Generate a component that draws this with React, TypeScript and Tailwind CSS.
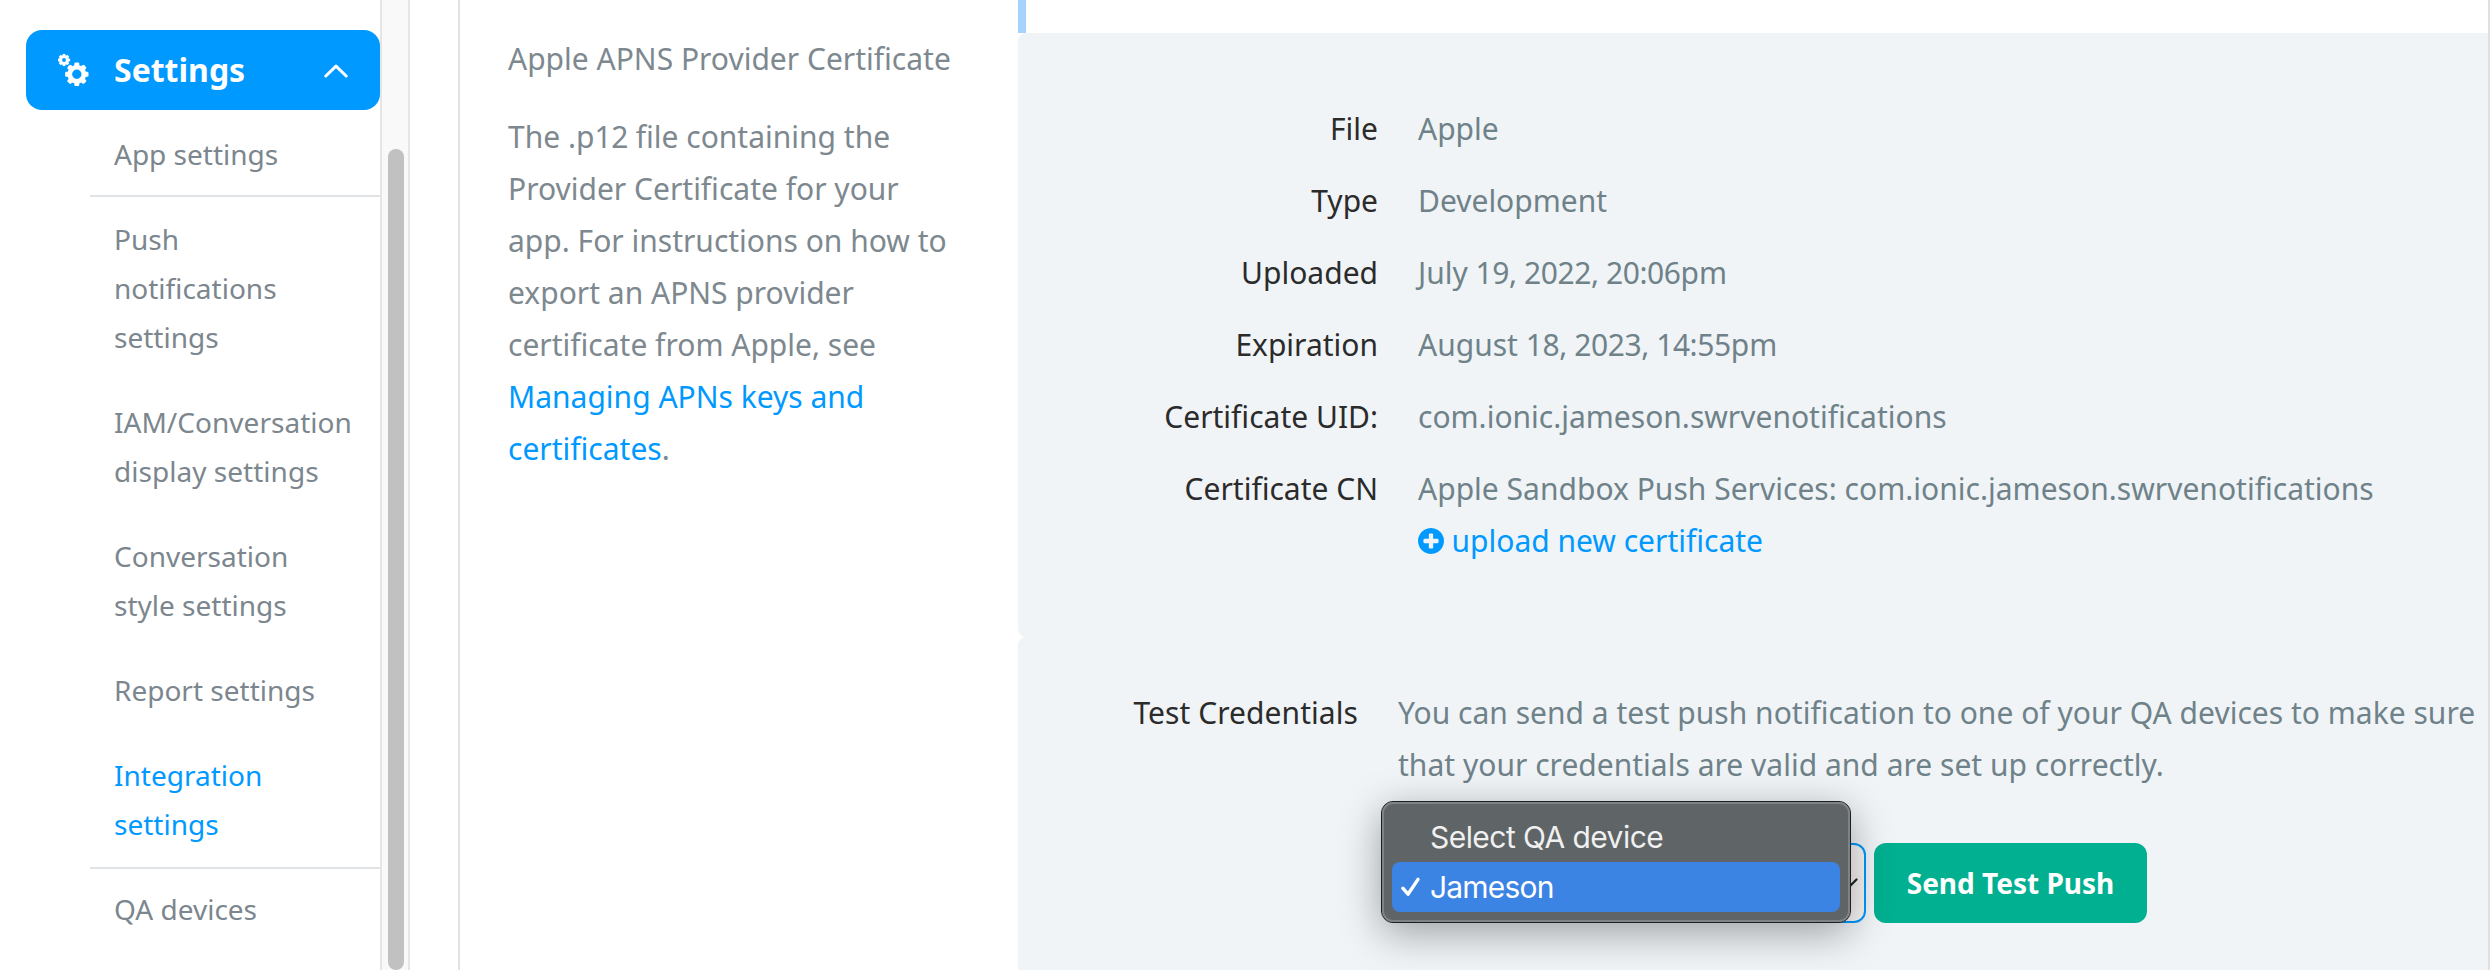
import type { ReactNode } from "react";

const TEETH = [0, 45, 90, 135, 180, 225, 270, 315];

function Gear({ cx, cy, outer, body, hole, tooth }: { cx: number; cy: number; outer: number; body: number; hole: number; tooth: number }) {
  const mid = (body + hole) / 2;
  return (
    <g transform={`translate(${cx} ${cy})`} stroke="currentColor" fill="none">
      <circle r={mid} strokeWidth={body - hole} />
      {TEETH.map((a) => (
        <rect
          key={a}
          x={-tooth / 2}
          y={-outer}
          width={tooth}
          height={outer - mid}
          rx={tooth / 4}
          fill="currentColor"
          stroke="none"
          transform={`rotate(${a})`}
        />
      ))}
    </g>
  );
}

function GearsIcon() {
  return (
    <svg viewBox="0 0 32 34" className="h-[34px] w-8 shrink-0">
      <Gear cx={6} cy={7} outer={6.1} body={4.8} hole={1.9} tooth={3} />
      <Gear cx={18.8} cy={21.3} outer={11.7} body={9.4} hole={4.7} tooth={5} />
    </svg>
  );
}

function PlusCircle() {
  return (
    <svg viewBox="128 128 1536 1536" className="h-[26px] w-[26px] shrink-0 fill-current">
      <path d="M1344 960v-128q0-26-19-45t-45-19h-256v-256q0-26-19-45t-45-19h-128q-26 0-45 19t-19 45v256h-256q-26 0-45 19t-19 45v128q0 26 19 45t45 19h256v256q0 26 19 45t45 19h128q26 0 45-19t19-45v-256h256q26 0 45-19t19-45zm320-64q0 209-103 385.5t-279.5 279.5-385.5 103-385.5-103-279.5-279.5-103-385.5 103-385.5 279.5-279.5 385.5-103 385.5 103 279.5 279.5 103 385.5z" />
    </svg>
  );
}

const navItems: { label: ReactNode; className: string }[] = [
  { label: "App settings", className: "border-b-2 pt-[18px] pb-4 text-[#7c868e]" },
  { label: <>Push<br />notifications<br />settings</>, className: "py-[18px] text-[#7c868e]" },
  { label: <>IAM/Conversation<br />display settings</>, className: "py-[18px] tracking-[0.03px] text-[#7c868e]" },
  { label: <>Conversation<br />style settings</>, className: "py-[18px] text-[#7c868e]" },
  { label: "Report settings", className: "py-[18px] text-[#7c868e]" },
  { label: <>Integration<br />settings</>, className: "border-b-2 py-[18px] text-[#0099ff]" },
  { label: "QA devices", className: "pt-4 text-[#7c868e]" },
];

function Sidebar() {
  return (
    <nav className="w-[380px] shrink-0 pt-[30px] pl-[26px]">
      <button className="flex h-20 w-[354px] items-center rounded-2xl bg-[#0099ff] pr-8 pl-8 text-white">
        <GearsIcon />
        <span className="ml-6 text-[32px] leading-[44px] font-bold">Settings</span>
        <svg viewBox="0 0 24 14" className="mt-[1px] ml-auto h-[14px] w-6" fill="none" stroke="currentColor" strokeWidth="3" strokeLinecap="round" strokeLinejoin="round">
          <path d="M1.8 12L12 2.2L22.2 12" />
        </svg>
      </button>
      <ul className="mt-0.5 ml-16 text-[28px] leading-[49px]">
        {navItems.map((item, i) => (
          <li key={i} className={`border-[#dfe3e6] pl-6 whitespace-nowrap ${item.className}`}>
            {item.label}
          </li>
        ))}
      </ul>
    </nav>
  );
}

function Row({ label, children }: { label: string; children: ReactNode }) {
  return (
    <div className="mb-5 flex gap-10 last:mb-0">
      <dt className="w-[360px] text-right text-[#2b2b2b]">{label}</dt>
      <dd>{children}</dd>
    </div>
  );
}

/* Numerals are set slightly tighter than the surrounding words. */
function Num({ children }: { children: string }) {
  return <span className="tracking-[-0.42px]">{children}</span>;
}

function DeviceMenu() {
  return (
    <div className="absolute -top-[42px] -left-[17px] h-[122px] w-[470px] rounded-xl border border-[#1d2023] bg-[#5f6467] shadow-[0_10px_40px_rgba(0,0,0,0.35)]">
      <div className="h-full rounded-[11px] border-2 border-[#7f8385] px-2 py-2 font-['Inter',sans-serif] text-[30px] leading-[50px] tracking-[-0.55px] text-[#f0f0f0]">
        <div className="pl-[38px]">Select QA device</div>
        <div className="flex rounded-lg bg-[#3b84e4] tracking-[-0.8px] text-white">
          <span className="flex w-[38px] items-center pl-2">
            <svg viewBox="0 0 22 22" className="h-[22px] w-[22px]" fill="none" stroke="currentColor" strokeWidth="3.4" strokeLinecap="round" strokeLinejoin="round">
              <path d="M2.8 12.2L8 18.2L18 3.4" />
            </svg>
          </span>
          Jameson
        </div>
      </div>
    </div>
  );
}

export default function App() {
  return (
    <div className="flex h-[970px] w-[2490px] overflow-hidden bg-white font-['Noto_Sans',sans-serif] text-[30px] leading-[52px] text-[#7d888f]">
      <Sidebar />
      <div className="w-[30px] shrink-0 border-x-2 border-[#e5e5e5] bg-[#f9f9f9] pt-[149px] pl-1.5">
        <div className="h-[821px] w-4 rounded-full bg-[#c1c1c1]" />
      </div>
      <main className="ml-12 flex grow border-x-2 border-l-[#dfe3e6] border-r-[#e0e0e0]">
        <section className="w-[558px] shrink-0 pt-[33px] pl-12">
          <h2>Apple APNS Provider Certificate</h2>
          <p className="mt-[26px] whitespace-nowrap">
            The .p<Num>12</Num> file containing the
            <br />
            Provider Certificate for your
            <br />
            app. For instructions on how to
            <br />
            export an APNS provider
            <br />
            certificate from Apple, see
            <br />
            <a className="text-[#0099ff]">
              Managing APNs keys and
              <br />
              certificates
            </a>
            .
          </p>
        </section>
        <section className="grow text-[#6f8289]">
          <div className="h-[33px] w-2 bg-[#a6d3fd]" />
          <dl className="h-[604px] rounded-l-lg bg-[#f0f4f7] pt-[70px]">
            <Row label="File">Apple</Row>
            <Row label="Type">Development</Row>
            <Row label="Uploaded">
              July <Num>19, 2022, 20:06</Num>pm
            </Row>
            <Row label="Expiration">
              August <Num>18, 2023, 14:55</Num>pm
            </Row>
            <Row label="Certificate UID:">com.ionic.jameson.swrvenotifications</Row>
            <Row label="Certificate CN">
              <span className="tracking-[0.015px]">Apple Sandbox Push Services: com.ionic.jameson.swrvenotifications</span>
              <a className="flex items-center gap-[7.5px] text-[#0099ff]">
                <PlusCircle />
                upload new certificate
              </a>
            </Row>
          </dl>
          <div className="flex h-[400px] gap-10 rounded-l-lg bg-[#f0f4f7] pt-[50px]">
            <div className="w-[340px] shrink-0 text-right tracking-[0.06px] text-[#2b2b2b]">Test Credentials</div>
            <div className="whitespace-nowrap">
              <p className="tracking-[0.015px]">
                You can send a test push notification to one of your QA devices to make sure
                <br />
                that your credentials are valid and are set up correctly.
              </p>
              <div className="relative mt-[52px] flex gap-2">
                <div className="flex h-20 w-[468px] items-center justify-end rounded-xl border-2 border-[#0099ff] bg-[#f9f6f5] pr-[6px]">
                  <svg viewBox="0 0 20 12" className="mt-0.5 h-3 w-5" fill="none" stroke="#1c2126" strokeWidth="2.2" strokeLinecap="round" strokeLinejoin="round">
                    <path d="M1.5 1.5L10 10L18.5 1.5" />
                  </svg>
                </div>
                <button className="h-20 w-[273px] rounded-xl bg-[#00b090] text-[28px] font-bold text-white">Send Test Push</button>
                <DeviceMenu />
              </div>
            </div>
          </div>
        </section>
      </main>
    </div>
  );
}
